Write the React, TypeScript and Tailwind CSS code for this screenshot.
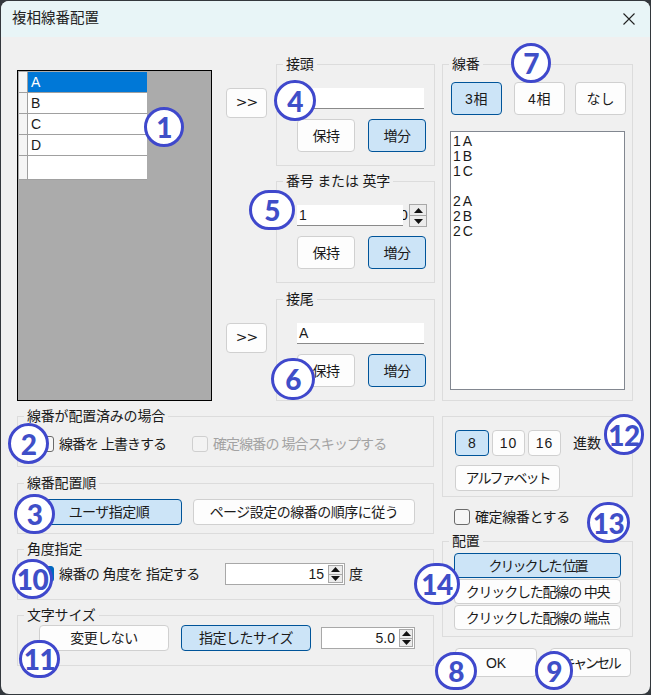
import type { ReactNode } from "react";

const Btn = ({ on, className, children }: { on?: boolean; className: string; children: ReactNode }) => (
  <div
    className={`flex items-center justify-center rounded-[4px] border text-[14px] leading-none text-[#1a1a1a] ${
      on ? "border-[#005499] bg-[#cce4f7]" : "border-[#d0d0d0] bg-[#fdfdfd]"
    } ${className}`}
  >
    {children}
  </div>
);

const Group = ({ title, className, children }: { title: string; className: string; children: ReactNode }) => (
  <fieldset className={`border border-[#dcdcdc] ${className}`}>
    <legend className="ml-[6px] px-[3px] text-[14px] leading-[16px] tracking-[-0.2px] text-[#1a1a1a]">{title}</legend>
    {children}
  </fieldset>
);

const Check = ({ checked, disabled }: { checked?: boolean; disabled?: boolean }) => (
  <div
    className={`h-[16px] w-[16px] shrink-0 rounded-[3px] border ${
      checked ? "border-[#0067c0] bg-[#0067c0]" : disabled ? "border-[#cfcfcf] bg-[#f3f3f3]" : "border-[#6b6b6b] bg-[#f6f6f6]"
    }`}
  />
);

const Spin = ({ className }: { className: string }) => (
  <div className={`flex shrink-0 flex-col gap-px border border-[#a8a8a8] bg-[#a8a8a8] ${className}`}>
    <div className="flex flex-1 items-center justify-center bg-[#ececec]">
      <svg width="9" height="5" viewBox="0 0 9 5"><path d="M4.5 0 9 5H0z" fill="#111" /></svg>
    </div>
    <div className="flex flex-1 items-center justify-center bg-[#ececec]">
      <svg width="9" height="5" viewBox="0 0 9 5"><path d="M0 0h9L4.5 5z" fill="#111" /></svg>
    </div>
  </div>
);

const Affix = ({ title, value, number, className }: { title: string; value?: string; number?: boolean; className: string }) => (
  <Group title={title} className={`h-[110px] w-[159px] ${className}`}>
    {number ? (
      <div className="ml-[20px] mt-[16px] flex h-[21px] w-[130px] items-stretch">
        <div className="flex w-[106px] items-center border-b border-[#8a8a8a] bg-white pl-[2px] text-[14px]">{value}</div>
        <div className="w-[6px] overflow-hidden text-[14px] leading-[21px] text-[#111]">
          <span className="-ml-[3px] block">0</span>
        </div>
        <Spin className="-mt-px h-[23px] w-[18px]" />
      </div>
    ) : (
      <div className="ml-[20px] mt-[16px] flex h-[21px] w-[127px] items-center border-b border-[#8a8a8a] bg-white pl-[2px] text-[14px]">
        {value}
      </div>
    )}
    <div className="ml-[20px] mt-[10px] flex gap-[13px]">
      <Btn className="h-[33px] w-[58px] tracking-[-0.5px]">保持</Btn>
      <Btn on className="h-[33px] w-[58px] tracking-[-0.5px]">増分</Btn>
    </div>
  </Group>
);

const Arrow = () => <Btn className="h-[30px] w-[41px] pb-[2px] font-['DejaVu_Sans',sans-serif] !text-[14px] font-normal tracking-[-1px]">&gt;&gt;</Btn>;

const rows = ["A", "B", "C", "D", ""];

const badges = [
  { n: "1", c: "left-[144px] top-[107px] h-[40px] w-[40px]" },
  { n: "4", c: "left-[274px] top-[80px] h-[41px] w-[42px]" },
  { n: "5", c: "left-[249px] top-[190px] h-[40px] w-[46px]" },
  { n: "6", c: "left-[271px] top-[358px] h-[42px] w-[44px]" },
  { n: "7", c: "left-[511px] top-[43px] h-[40px] w-[40px]" },
  { n: "2", c: "left-[8px] top-[423px] h-[41px] w-[41px]" },
  { n: "3", c: "left-[14px] top-[494px] h-[40px] w-[41px]" },
  { n: "10", c: "left-[12px] top-[559px] h-[40px] w-[41px]" },
  { n: "11", c: "left-[19px] top-[640px] h-[38px] w-[41px]" },
  { n: "12", c: "left-[604px] top-[414px] h-[41px] w-[40px]" },
  { n: "13", c: "left-[587px] top-[502px] h-[41px] w-[43px]" },
  { n: "14", c: "left-[414px] top-[563px] h-[42px] w-[46px]" },
  { n: "8", c: "left-[435px] top-[652px] h-[38px] w-[42px]" },
  { n: "9", c: "left-[535px] top-[651px] h-[39px] w-[38px]" },
];

export default function App() {
  return (
    <div className="relative h-[695px] w-[651px] overflow-hidden bg-[#33383d] p-px font-['Liberation_Sans','Noto_Sans_CJK_JP',sans-serif] text-[#1a1a1a]">
      <div className="h-[693px] w-[649px] overflow-hidden rounded-[8px] bg-[#f0f0f0]">
        {/* Title bar */}
        <div className="flex h-[36px] items-center justify-between bg-[#e8f5f7] pl-[11px] pr-[15px]">
          <span className="text-[14.5px] text-[#222]">複相線番配置</span>
          <svg width="12" height="12" viewBox="0 0 12 12" stroke="#222" strokeWidth="1.1">
            <path d="M0.5 0.5l11 11M11.5 0.5l-11 11" />
          </svg>
        </div>

        <div className="flex gap-[7px] pl-[16px] pt-[19px]">
          {/* Left side */}
          <div className="w-[418px]">
            <div className="flex">
              <div className="mt-[14px] h-[331px] w-[195px] shrink-0 border border-black bg-[#ababab] pl-px pt-px">
                {rows.map((r, i) => (
                  <div key={i} className={`flex ${i === 4 ? "h-[24px]" : "h-[21px]"}`}>
                    <div className="w-[9px] border-b border-r border-[#a0a0a0] bg-[#f5f5f5]" />
                    <div
                      className={`flex w-[119px] items-center border-b border-[#a0a0a0] pl-[3px] text-[14px] ${
                        i === 0 ? "bg-[#0078d7] text-white" : "bg-white"
                      }`}
                    >
                      {r}
                    </div>
                  </div>
                ))}
              </div>
              <div className="ml-[14px] flex flex-col">
                <div className="flex h-[117px] gap-[9px]">
                  <div className="mt-[32px]"><Arrow /></div>
                  <Affix title="接頭" className="" />
                </div>
                <Affix title="番号 または 英字" value="1" number className="ml-[50px]" />
                <div className="mt-[8px] flex gap-[9px]">
                  <div className="mt-[32px]"><Arrow /></div>
                  <Affix title="接尾" value="A" className="" />
                </div>
              </div>
            </div>

            <Group title="線番が配置済みの場合" className="mt-[7px] h-[59px] w-[417px]">
              <div className="ml-[20px] mt-[12px] flex items-center text-[14px] leading-[16px]">
                <div className="flex w-[154px] items-center gap-[5px] tracking-[-1px]">
                  <Check />
                  <span>線番を 上書きする</span>
                </div>
                <div className="flex items-center gap-[5px] tracking-[-0.9px] text-[#a3a3a3]">
                  <Check disabled />
                  <span>確定線番の 場合スキップする</span>
                </div>
              </div>
            </Group>

            <Group title="線番配置順" className="mt-[8px] h-[59px] w-[417px]">
              <div className="ml-[18px] mt-[8px] flex gap-[11px]">
                <Btn on className="h-[26px] w-[146px] tracking-[-0.5px]">ユーザ指定順</Btn>
                <Btn className="h-[26px] w-[222px] tracking-[-0.5px]">ページ設定の線番の順序に従う</Btn>
              </div>
            </Group>

            <Group title="角度指定" className="mt-[7px] h-[59px] w-[417px]">
              <div className="ml-[20px] mt-[6px] flex h-[22px] items-center text-[14px]">
                <div className="flex w-[187px] items-center gap-[5px] tracking-[-0.6px]">
                  <Check checked />
                  <span>線番の 角度を 指定する</span>
                </div>
                <div className="flex h-[22px] w-[120px] items-center justify-between border border-[#a8a8a8] bg-white pr-px text-[14px]">
                  <span className="ml-auto mr-[4px]">15</span>
                  <Spin className="h-[18px] w-[15px]" />
                </div>
                <span className="ml-[4px]">度</span>
              </div>
            </Group>

            <Group title="文字サイズ" className="mt-[7px] h-[59px] w-[417px]">
              <div className="ml-[21px] mt-[2px] flex items-center">
                <Btn className="h-[26px] w-[130px] tracking-[-0.5px]">変更しない</Btn>
                <Btn on className="ml-[12px] h-[26px] w-[130px] tracking-[-0.5px]">指定したサイズ</Btn>
                <div className="ml-[10px] flex h-[22px] w-[94px] items-center border border-[#a8a8a8] bg-white pr-px text-[14px]">
                  <span className="ml-auto mr-[4px]">5.0</span>
                  <Spin className="h-[18px] w-[14px]" />
                </div>
              </div>
            </Group>
          </div>

          {/* Right side */}
          <div className="w-[191px]">
            <Group title="線番" className="h-[345px] w-[191px]">
              <div className="ml-[8px] mt-[10px] flex">
                <Btn on className="h-[33px] w-[51px] tracking-[0.5px]">3相</Btn>
                <Btn className="ml-[12px] h-[33px] w-[51px] tracking-[0.5px]">4相</Btn>
                <Btn className="ml-[10px] h-[33px] w-[51px]">なし</Btn>
              </div>
              <div className="ml-[7px] mt-[16px] h-[259px] w-[175px] border border-[#828790] bg-white pl-[2px] pt-[2px] text-[14px] leading-[15px] tracking-[2px]">
                <div>1A</div>
                <div>1B</div>
                <div>1C</div>
                <div className="h-[15px]" />
                <div>2A</div>
                <div>2B</div>
                <div>2C</div>
              </div>
            </Group>

            <div className="mt-[15px] h-[81px] border border-[#dcdcdc] pl-[12px] pt-[13px]">
              <div className="flex items-center">
                <Btn on className="h-[26px] w-[34px]">8</Btn>
                <Btn className="ml-[3px] h-[26px] w-[33px] tracking-[1px]">10</Btn>
                <Btn className="ml-[3px] h-[26px] w-[33px] tracking-[1px]">16</Btn>
                <span className="ml-[12px] text-[14px]">進数</span>
              </div>
              <Btn className="mt-[9px] h-[26px] w-[105px] tracking-[-2px]">アルファベット</Btn>
            </div>

            <div className="ml-[12px] mt-[12px] flex items-center gap-[5px] text-[14px] leading-[16px] tracking-[-0.4px]">
              <Check />
              <span>確定線番とする</span>
            </div>

            <Group title="配置" className="mt-[8px] h-[104px] w-[191px]">
              <div className="ml-[11px] mt-[4px] flex w-[167px] flex-col gap-px">
                <Btn on className="h-[25px] tracking-[-2px]">クリックした 位置</Btn>
                <Btn className="h-[25px] tracking-[-1.2px]">クリックした配線の 中央</Btn>
                <Btn className="h-[25px] tracking-[-1.2px]">クリックした配線の 端点</Btn>
              </div>
            </Group>

            <div className="ml-[13px] mt-[11px] flex gap-[13px]">
              <Btn className="h-[29px] w-[82px]">OK</Btn>
              <Btn className="h-[29px] w-[81px] tracking-[-2.5px]">キャンセル</Btn>
            </div>
          </div>
        </div>
      </div>

      {/* Numbered callouts */}
      {badges.map((b) => (
        <div
          key={b.n}
          className={`absolute flex items-center justify-center rounded-full border-[3px] border-[#3f48cc] bg-white font-['Lato',sans-serif] text-[28px] font-black leading-none tracking-[-0.5px] text-[#3f4fc8] ${b.c}`}
        >
          {b.n}
        </div>
      ))}
    </div>
  );
}
